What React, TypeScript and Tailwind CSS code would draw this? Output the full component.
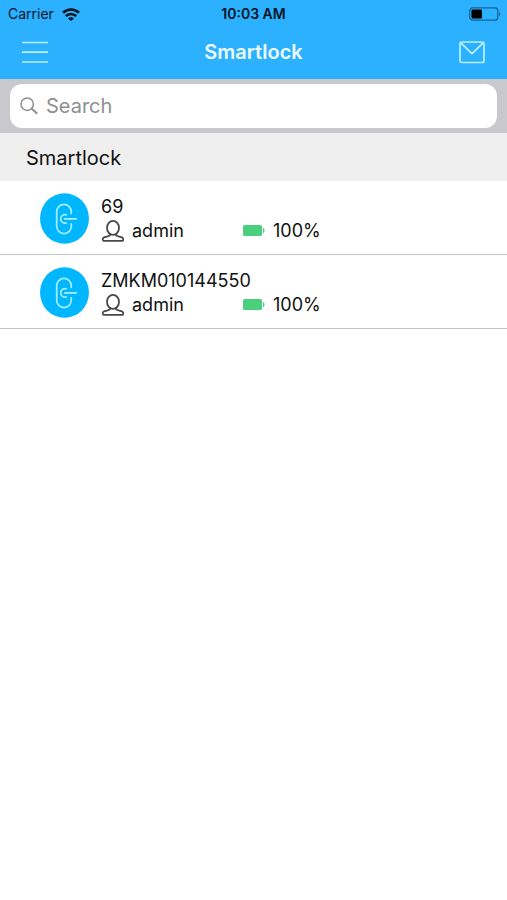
type Lock = { name: string; role: string; battery: string };

const locks: Lock[] = [
  { name: "69", role: "admin", battery: "100%" },
  { name: "ZMKM010144550", role: "admin", battery: "100%" },
];

function WifiIcon() {
  return (
    <svg className="h-[13px] w-[18px]" viewBox="0 0 18 13" fill="none" stroke="#04141f" strokeWidth="2.6" aria-hidden="true">
      <path d="M1 4.8C5.5.4 12.5.4 17 4.8" />
      <path d="M3.8 8.2c2.9-2.9 7.5-2.9 10.4 0" />
      <path d="M6 10.4c1.7-1.7 4.300-1.700 6 0L9 13z" fill="#04141f" stroke="none" />
    </svg>
  );
}

function PhoneBatteryIcon() {
  return (
    <svg className="h-[14px] w-[32px]" viewBox="0 0 32 14" fill="none" aria-hidden="true">
      <rect x="0.8" y="0.8" width="28" height="12.4" rx="3" stroke="#17648f" strokeWidth="1.3" />
      <rect x="2.5" y="2.5" width="10.5" height="9" rx="1" fill="#000" />
      <path d="M30.2 4.7c1.5.7 1.5 3.9 0 4.6z" fill="#17648f" />
    </svg>
  );
}

function MenuIcon() {
  return (
    <svg className="h-6 w-[26px]" viewBox="0 0 26 24" stroke="#b9f0ff" strokeWidth="1.7" aria-hidden="true">
      <path d="M0 2.5h26M0 12.2h26M0 22h26" />
    </svg>
  );
}

function MailIcon() {
  return (
    <svg className="h-6 w-[26px]" viewBox="0 0 26 24" fill="none" stroke="#b9f0ff" strokeWidth="1.7" aria-hidden="true">
      <rect x="1" y="2" width="24" height="20.5" rx="1.8" />
      <path d="m1.6 2.6 11.4 11 11.4-11" strokeLinejoin="round" />
    </svg>
  );
}

function SearchIcon() {
  return (
    <svg className="h-[18px] w-[18px]" viewBox="0 0 18 18" fill="none" stroke="#8e8e93" strokeWidth="1.5" aria-hidden="true">
      <circle cx="7.2" cy="7.2" r="6.2" />
      <path d="m11.6 11.6 5.6 5.2" strokeWidth="2" />
    </svg>
  );
}

function LockIcon() {
  return (
    <svg className="h-[51px] w-[49px] shrink-0" viewBox="0 0 49 51" fill="none" aria-hidden="true">
      <ellipse cx="24.5" cy="25.5" rx="24.5" ry="25.3" fill="#00b7ff" />
      <g stroke="#a6eeff" strokeWidth="1.7" strokeLinecap="round">
        <path d="M31.3 20.5v-1.8a7.3 7.3 0 0 0-14.6 0v14.6a7.3 7.3 0 0 0 14.6 0v-2.500" />
        <path d="M26.3 21.800a4.300 4.300 0 1 0 0 8.200" />
        <path d="M24.800 25.900h11.500" />
      </g>
    </svg>
  );
}

function PersonIcon() {
  return (
    <svg className="h-[22px] w-[23px]" viewBox="0 0 23 22" fill="none" stroke="#484848" strokeWidth="1.8" strokeLinejoin="round" aria-hidden="true">
      <ellipse cx="12" cy="7.900" rx="6" ry="7" />
      <path d="M8.800 13.800v1.700c-1.500.9-4.400 1.100-6 2-1.400.8-1.500 2.600-.2 3.400h18.800c1.300-.8 1.200-2.600-.2-3.400-1.600-.9-4.500-1.100-6-2v-1.700" />
    </svg>
  );
}

function LevelIcon() {
  return (
    <svg className="h-[11px] w-[22px]" viewBox="0 0 22 11" fill="#4acf7d" aria-hidden="true">
      <rect width="19" height="11" rx="1.5" />
      <path d="M20 2.8c2 .6 2 4.800 0 5.400z" />
    </svg>
  );
}

export default function App() {
  return (
    <div className="min-h-screen bg-white font-['Inter','Liberation_Sans',sans-serif] text-[#111111]">
      <header className="bg-[#2bb1ff]">
        <div className="grid h-7 grid-cols-[1fr_auto_1fr] items-center px-2 text-sm text-[#04141f]">
          <div className="flex items-center gap-2">
            <span>Carrier</span>
            <WifiIcon />
          </div>
          <span className="text-center font-semibold">10:03 AM</span>
          <div className="-mr-[2px] flex justify-end">
            <PhoneBatteryIcon />
          </div>
        </div>
        <div className="flex h-[51px] items-center justify-between px-[22px] pb-1">
          <button type="button" aria-label="Menu">
            <MenuIcon />
          </button>
          <h1 className="text-xl font-semibold text-[#edfbff]">Smartlock</h1>
          <button type="button" aria-label="Messages">
            <MailIcon />
          </button>
        </div>
      </header>

      <div className="bg-[#c8c8cd] px-[10px] py-[5px]">
        <label className="flex h-11 items-center gap-2 rounded-xl bg-white px-[10px]">
          <SearchIcon />
          <input
            type="search"
            aria-label="Search"
            placeholder="Search"
            className="min-w-0 flex-1 bg-transparent text-xl outline-none placeholder:text-[#8e8e93]"
          />
        </label>
      </div>

      <main>
        <h2 className="flex h-12 items-center bg-[#efeff0] px-[26px] pt-[2px] text-xl">Smartlock</h2>
        <ul>
          {locks.map((lock) => (
            <li key={lock.name} className="border-b border-[#c4c4c6]">
              <button type="button" className="flex w-full items-center gap-3 pt-3 pb-[10px] pl-10 text-left text-lg leading-6">
                <LockIcon />
                <span className="flex flex-col">
                  <span>{lock.name}</span>
                  <span className="flex items-center">
                    <span className="flex w-[142px] items-center gap-2">
                      <PersonIcon />
                      {lock.role}
                    </span>
                    <span className="flex items-center gap-2">
                      <LevelIcon />
                      {lock.battery}
                    </span>
                  </span>
                </span>
              </button>
            </li>
          ))}
        </ul>
      </main>
    </div>
  );
}
